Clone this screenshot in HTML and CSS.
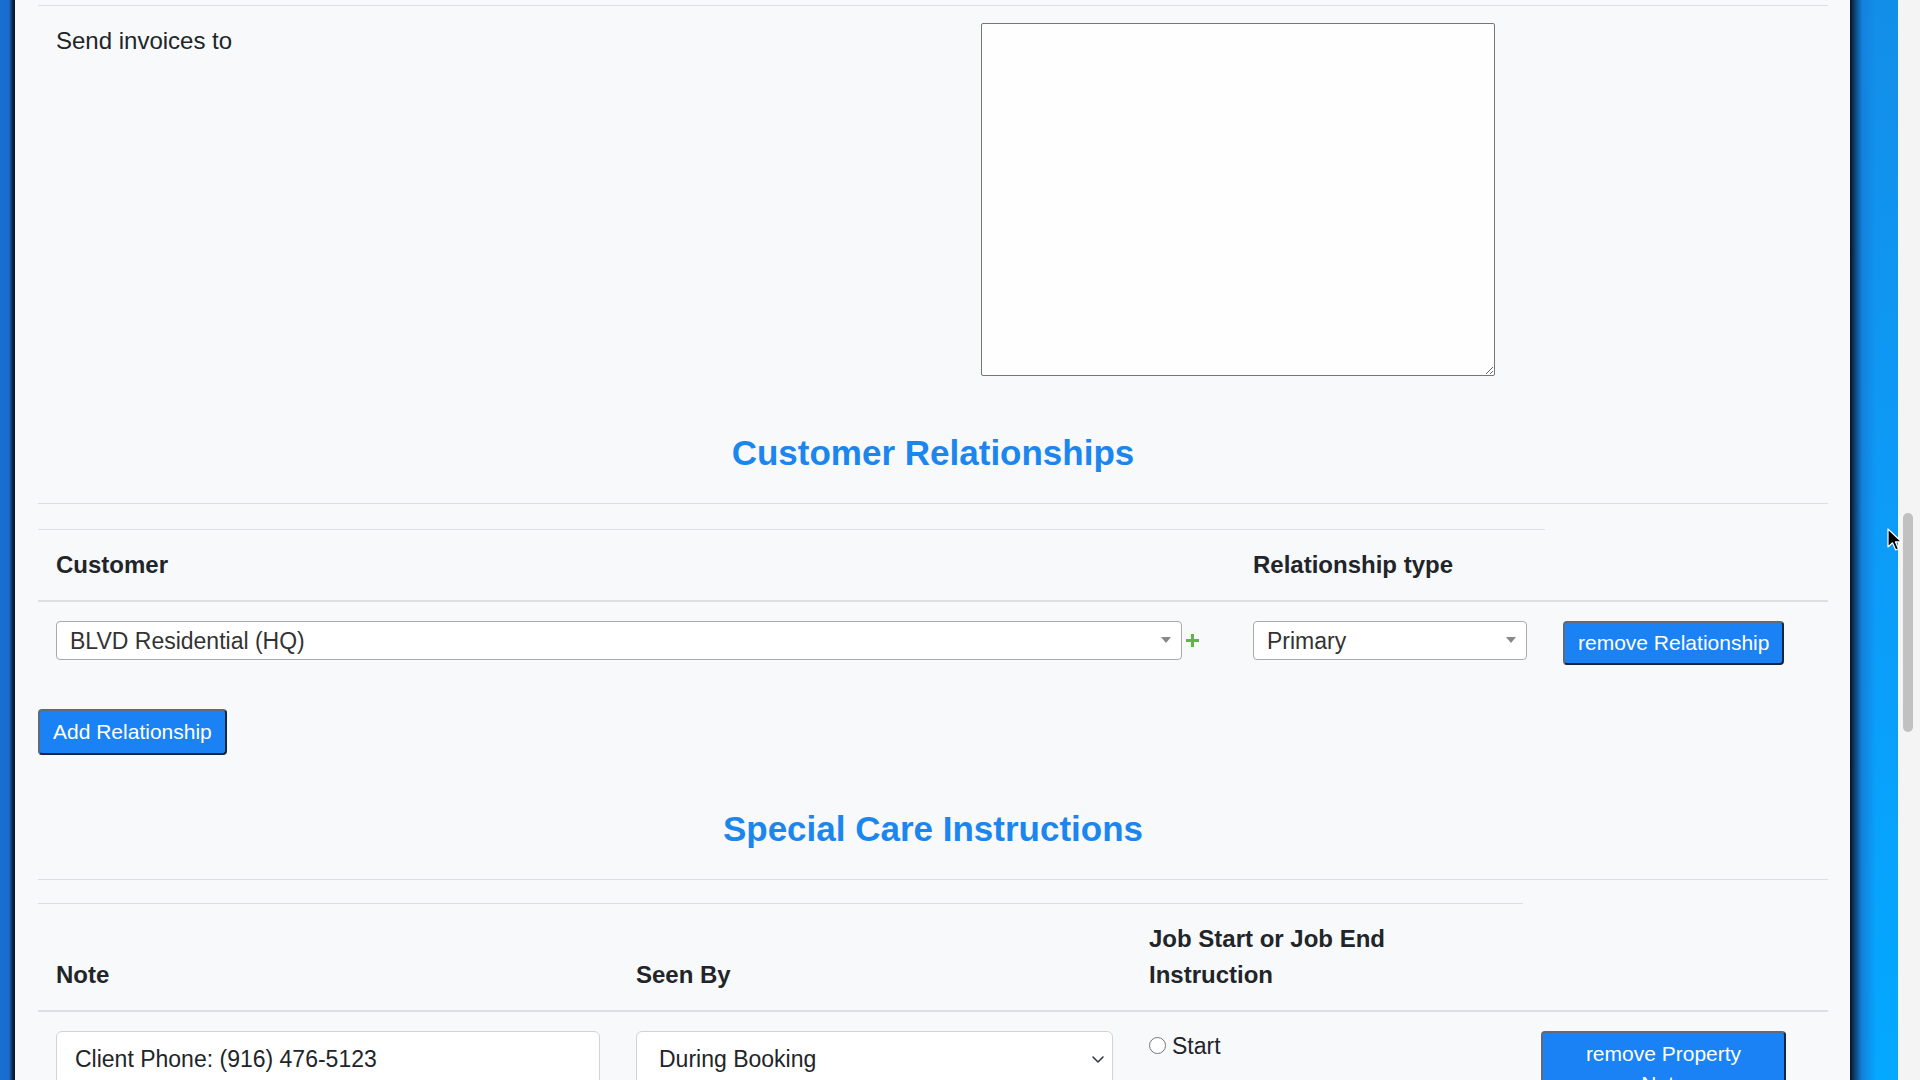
FILE: index.html
```html
<!DOCTYPE html>
<html lang="en">
<head>
    <meta charset="UTF-8">
    <meta name="viewport" content="width=device-width, initial-scale=1.0">
    <title>Property - Edit</title>
    <link rel="stylesheet" href="styles.css">
</head>
<body>

<div class="screen">
    <div class="edge-left"></div>

    <main class="page">
        <div class="page-inner">
            <hr class="rule">

            <!-- Billing -->
            <div class="form-row">
                <label class="form-label" for="invoiceTo">Send invoices to</label>
                <textarea id="invoiceTo" class="form-textarea"></textarea>
            </div>

            <!-- Customer relationships -->
            <h2 class="section-title">Customer Relationships</h2>
            <hr class="rule">

            <table class="data-table rel-table">
                <thead>
                    <tr>
                        <th class="col-customer">Customer</th>
                        <th class="col-type">Relationship type</th>
                        <th class="col-action no-top"></th>
                    </tr>
                </thead>
                <tbody>
                    <tr>
                        <td>
                            <div class="select-line">
                                <div class="select2">BLVD Residential (HQ)<span class="caret"></span></div>
                                <svg class="plus" width="13" height="13" viewBox="0 0 13 13">
                                    <rect x="5" y="0" width="3" height="13" fill="#63b446"/>
                                    <rect x="0" y="5" width="13" height="3" fill="#63b446"/>
                                </svg>
                            </div>
                        </td>
                        <td>
                            <div class="select2">Primary<span class="caret"></span></div>
                        </td>
                        <td>
                            <button class="btn">remove Relationship</button>
                        </td>
                    </tr>
                </tbody>
            </table>

            <button class="btn btn-add">Add Relationship</button>

            <!-- Special care -->
            <h2 class="section-title care-title">Special Care Instructions</h2>
            <hr class="rule">

            <table class="data-table care-table">
                <thead>
                    <tr>
                        <th class="col-note">Note</th>
                        <th class="col-seen">Seen By</th>
                        <th class="col-when">Job Start or Job End Instruction</th>
                        <th class="col-remove no-top"></th>
                    </tr>
                </thead>
                <tbody>
                    <tr>
                        <td>
                            <input class="form-input" type="text" value="Client Phone: (916) 476-5123">
                        </td>
                        <td>
                            <div class="form-select">
                                During Booking
                                <svg class="chevron" width="14" height="10" viewBox="0 0 14 10">
                                    <path d="M2 3l5 5 5-5" fill="none" stroke="#343a40" stroke-width="1.6" stroke-linecap="round" stroke-linejoin="round"/>
                                </svg>
                            </div>
                        </td>
                        <td>
                            <label class="radio"><input type="radio" name="when"> Start</label>
                        </td>
                        <td>
                            <button class="btn btn-wrap">remove Property Note</button>
                        </td>
                    </tr>
                </tbody>
            </table>
        </div>
    </main>

    <div class="edge-right"></div>
    <div class="scrollbar"><div class="thumb"></div></div>

    <svg class="cursor" width="16" height="24" viewBox="0 0 16 24">
        <path d="M1 1v18l4.5-4.2 3.2 7.2 2.8-1.2-3.1-7h6.1z" fill="#000" stroke="#fff" stroke-width="1.2" stroke-linejoin="round"/>
    </svg>
</div>

</body>
</html>
```

FILE: styles.css
```css
html, body {
    margin: 0;
    padding: 0;
    height: 100%;
    overflow: hidden;
}
body {
    font-family: "Liberation Sans", Arial, sans-serif;
    color: #212529;
    background-color: #f8f9fa;
}
.screen {
    position: relative;
    display: flex;
    width: 1920px;
    height: 1080px;
    overflow: hidden;
}
.edge-left {
    width: 15px;
    flex: none;
    background: linear-gradient(to right, #1a6fd2 0%, #176ccc 60%, #0b2542 85%, #07121f 100%);
}
.page {
    flex: 1;
    background-color: #f8f9fa;
    overflow: hidden;
}
.page-inner {
    padding: 5px 22px 0 23px;
}
.edge-right {
    width: 48px;
    flex: none;
    background:
        linear-gradient(to right, #07111b 0px, #0c3a66 4px, #1281dc 12px, rgba(18, 140, 240, 0) 26px),
        linear-gradient(to bottom, #138ee8 0%, #0c9cf8 50%, #04a8ff 100%);
}
.scrollbar {
    width: 22px;
    flex: none;
    background-color: #f4f4f4;
    position: relative;
}
.thumb {
    position: absolute;
    left: 5px;
    top: 513px;
    width: 10px;
    height: 219px;
    border-radius: 5px;
    background-color: #c1c1c1;
}
.cursor {
    position: absolute;
    left: 1887px;
    top: 528px;
}

.rule {
    margin: 0;
    border: 0;
    border-top: 1px solid #dcdfe3;
}

/* billing row */
.form-row {
    display: flex;
    align-items: flex-start;
    margin-top: 17px;
}
.form-label {
    width: 943px;
    box-sizing: border-box;
    padding-left: 18px;
    font-size: 24px;
    line-height: 36px;
}
.form-textarea {
    width: 514px;
    height: 353px;
    box-sizing: border-box;
    margin: 0;
    border: 1px solid #767676;
    border-radius: 2px;
    background-color: #fefefe;
}

.section-title {
    margin: 55px 0 29px;
    text-align: center;
    font-size: 35px;
    line-height: 43px;
    font-weight: bold;
    color: #1b86ee;
}
.care-title {
    margin-top: 52px;
}

/* tables */
.data-table {
    width: 100%;
    margin-top: 25px;
    border-collapse: collapse;
    table-layout: fixed;
}
.care-table {
    margin-top: 23px;
}
.data-table th {
    padding: 17px 18px;
    border-top: 1px solid #dcdfe3;
    border-bottom: 2px solid #dcdfe3;
    text-align: left;
    font-size: 24px;
    line-height: 36px;
    font-weight: bold;
    vertical-align: bottom;
}
.data-table th.no-top {
    border-top: none;
}
.data-table td {
    padding: 19px 18px;
    vertical-align: top;
    font-size: 24px;
}
/* widths are content widths, cells add 36px padding */
.col-customer { width: 1161px; }
.col-type { width: 274px; }
.col-note { width: 544px; }
.col-seen { width: 477px; }
.col-when { width: 356px; }

.select-line {
    display: flex;
    align-items: center;
    padding-right: 18px;
}
.select2 {
    position: relative;
    flex: 1;
    height: 39px;
    box-sizing: border-box;
    padding: 2px 30px 0 13px;
    border: 1px solid #aaa;
    border-radius: 4px;
    background-color: #fff;
    font-size: 23px;
    line-height: 35px;
    color: #333;
}
.caret {
    position: absolute;
    right: 10px;
    top: 15px;
    border-left: 5px solid transparent;
    border-right: 5px solid transparent;
    border-top: 6px solid #888;
}
.plus {
    margin-left: 4px;
    flex: none;
}

/* buttons */
.btn {
    padding: 6px 13px;
    border: 2px solid;
    border-color: #5f6b7a #17263a #17263a #5f6b7a;
    border-radius: 4px;
    background-color: #1a82f5;
    color: #fff;
    font-family: "Liberation Sans", Arial, sans-serif;
    font-size: 21px;
    line-height: 30px;
    cursor: pointer;
}
.rel-table .btn {
    padding-top: 5px;
    padding-bottom: 5px;
}
.btn-add {
    margin-top: 25px;
}
.btn-wrap {
    width: 245px;
    padding-left: 24px;
    padding-right: 24px;
}

/* special care row */
.form-input {
    width: 100%;
    height: 56px;
    box-sizing: border-box;
    padding: 0 18px;
    border: 1px solid #ced4da;
    border-radius: 6px;
    background-color: #fff;
    font-family: "Liberation Sans", Arial, sans-serif;
    font-size: 23px;
    color: #212529;
}
.form-select {
    position: relative;
    height: 56px;
    box-sizing: border-box;
    padding: 0 40px 0 22px;
    border: 1px solid #ced4da;
    border-radius: 6px;
    background-color: #fff;
    font-size: 23px;
    line-height: 54px;
}
.chevron {
    position: absolute;
    right: 7px;
    top: 22px;
}
.radio {
    display: flex;
    align-items: center;
    gap: 6px;
    font-size: 23px;
    line-height: 30px;
}
.radio input {
    width: 17px;
    height: 17px;
    margin: 0 0 2px 0;
}
```
